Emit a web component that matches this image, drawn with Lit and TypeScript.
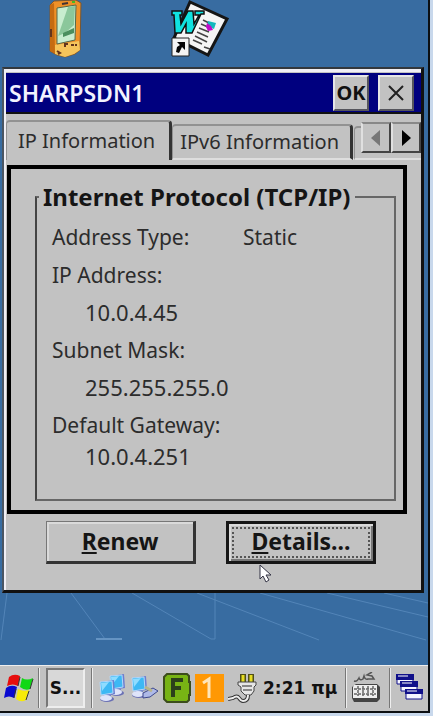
import { LitElement, html, css, svg } from "lit";
import { customElement, state } from "lit/decorators.js";

const details = [
  { label: "IP Address:", value: "10.0.4.45" },
  { label: "Subnet Mask:", value: "255.255.255.0" },
  { label: "Default Gateway:", value: "10.0.4.251" },
];

const monitor = (x: number, y: number) => svg`
  <g transform="translate(${x} ${y})">
    <path d="M2 2 15 0 16 14 4 16Z" fill="#6d7fd0"/>
    <path d="M1 2 13 1 14 13 2 15Z" fill="#3db8f4" stroke="#b4d8fa"/>
    <path d="M2 3 10 2 3 11Z" fill="#8fdcff"/>
    <path d="M6 15h6v3H6z" fill="#7488c4"/>
    <ellipse cx="8" cy="19" rx="7" ry="3" fill="#6a70b4"/>
    <ellipse cx="7" cy="18" rx="6" ry="3" fill="#dfe4fa"/>
  </g>`;

@customElement("app-root")
export class AppRoot extends LitElement {
  @state() private tab = 0;

  static styles = css`
    :host {
      display: flex;
      box-sizing: border-box;
      min-height: 100vh;
      padding: 0 3px 3px 0;
      background: #c8d8ec;
      color: #2c2c2c;
      font: 21px/38px "Noto Sans", sans-serif;
    }
    svg { display: block; flex: none; }
    button { font: inherit; color: inherit; padding: 0; border-radius: 0; }
    .desktop {
      flex: 1;
      min-width: 0;
      display: flex;
      flex-direction: column;
      background: #386ca1;
      border: solid #0c0f12;
      border-width: 0 2px 2px 0;
    }
    .shortcuts { display: flex; gap: 86px; padding: 0 48px 9px; }
    .window {
      margin: 0 4px 0 2px;
      padding: 4px 0 26px 2px;
      background: #c2c2c2;
      border: solid #111;
      border-width: 2px 3px 3px 2px;
      border-left-color: #4b5663;
      border-top-color: #33383d;
      box-shadow: inset 2px 3px #f0eff5;
    }
    .title {
      display: flex;
      align-items: center;
      gap: 9px;
      height: 39px;
      padding: 0 7px 0 3px;
      background: #00007f;
      border-bottom: 2px solid #111;
      color: #f2f2ff;
    }
    .title h1 { flex: 1; margin: 0; font-size: 23px; font-weight: 600; line-height: 38px; }
    .title button {
      display: grid;
      place-items: center;
      width: 36px;
      height: 36px;
      color: #111;
      background: #c2c2c2;
      border: 2px solid;
      border-color: #e6e6e6 #55555c #55555c #e6e6e6;
      font-size: 20px;
      font-weight: 700;
      line-height: 28px;
    }
    .tabs {
      display: flex;
      align-items: flex-end;
      padding-top: 6px;
      box-shadow: inset 0 -2px #dedede;
    }
    .tab {
      height: 36px;
      padding: 0 11px 0 7px;
      background: #c2c2c2;
      border: solid #929292;
      border-width: 2px 3px 0 1px;
      border-right-color: #333;
      border-bottom: 2px solid #dedede;
      border-radius: 4px 4px 0 0;
      font-size: 20px;
      line-height: 30px;
      white-space: nowrap;
    }
    .tab.active {
      height: 40px;
      padding: 0 14px 0 11px;
      border-bottom: 0;
      line-height: 34px;
    }
    .next-tab {
      width: 8px;
      height: 34px;
      margin-left: 1px;
      border: solid #929292;
      border-width: 2px 0 0 1px;
      border-bottom: 2px solid #dedede;
      border-radius: 4px 0 0 0;
      box-sizing: border-box;
    }
    .scroll { display: flex; flex: 1; justify-content: flex-end; align-self: flex-start; }
    .scroll button {
      display: grid;
      place-items: center;
      width: 30px;
      height: 31px;
      margin-top: 2px;
      background: #c2c2c2;
      border: 2px solid;
      border-color: #888 #444 #444 #e0e0e0;
    }
    .panel {
      margin: 5px 14px 0 1px;
      padding: 14px 7px 9px 24px;
      border: 4px solid #000;
    }
    fieldset {
      min-width: 0;
      margin: 0;
      padding: 7px 14px 31px 15px;
      border: 2px solid #666;
      border-left-color: #444;
    }
    legend {
      margin-left: -13px;
      padding: 0 4px;
      color: #151515;
      font-size: 24px;
      font-weight: 700;
      line-height: 28px;
      white-space: nowrap;
    }
    dl { margin: 0; }
    dt, dd { margin: 0; }
    dd { padding-left: 33px; font-size: 22px; line-height: 37px; }
    dd:last-child { line-height: 24px; }
    .inline { display: grid; grid-template-columns: 191px 1fr; }
    .inline dd { padding: 0; font-size: 21px; line-height: 38px; }
    .actions {
      position: relative;
      display: flex;
      justify-content: center;
      gap: 30px;
      padding: 7px 5px 0 0;
    }
    .actions button {
      width: 150px;
      height: 43px;
      padding-bottom: 2px;
      background: #c2c2c2;
      border: solid #333;
      border-width: 1px 3px 3px 1px;
      border-left-color: #777;
      border-top-color: #777;
      box-shadow: inset 2px 2px #dadada;
      color: #151515;
      font-size: 23px;
      font-weight: 700;
      line-height: 30px;
    }
    .actions .default {
      padding: 3px;
      border: 3px solid #161616;
      box-shadow: inset 2px 2px #dadada, inset -2px -2px #777;
    }
    .focus { display: block; height: 27px; border: 2px dotted #555; line-height: 24px; }
    .pointer { position: absolute; left: 253px; top: 50px; }
    .wall { flex: 1; min-height: 0; overflow: hidden; }
    .taskbar {
      display: flex;
      align-items: center;
      height: 46px;
      padding: 0 4px;
      background: #c2c2c2;
      box-shadow: inset 0 1px #eee;
      font: 700 17px/32px "DejaVu Sans", sans-serif;
      color: #111;
    }
    .task {
      flex: none;
      width: 39px;
      height: 40px;
      margin: 0 2px;
      background: #d8d8d8;
      border: 2px solid;
      border-color: #777 #eee #eee #777;
      text-align: center;
      white-space: nowrap;
    }
    .sep { flex: none; width: 1px; height: 40px; margin: 0 4px; background: #777; border-right: 1px solid #eee; }
    .tray { display: flex; flex: 1; align-items: center; gap: 4px; padding-left: 2px; }
    time { margin-left: 1px; white-space: nowrap; }
  `;

  render() {
    return html`
      <main class="desktop">
        <div class="shortcuts">
          <svg width="36" height="58" viewBox="0 0 36 58" aria-label="Handheld">
            <path d="M2 5 6 1 28 0 33 3 32 50 27 54 17 57 9 55 2 51Z" fill="#ef9128" stroke="#7a5730"/>
            <path d="M2 5 6 3 7 54 2 51Z" fill="#c56b12"/>
            <path d="M7 45 31 41 32 50 26 54 17 57 7 54Z" fill="#f5c45b"/>
            <path d="M9 8 28 5 27 40 9 44Z" fill="#c8edcf" stroke="#55694a"/>
            <path d="M20 7 27 6 26 25 17 33 10 36Z" fill="#8bc79b"/>
            <path d="M15 33 26 28v5l-11 4Z" fill="#4b8f5e"/>
            <path d="M14 4 20 3" stroke="#433" stroke-width="2"/><path d="M24 2h3" stroke="#4b2" stroke-width="2"/>
            <path d="M17 47v-3h3m3 1h3m2-1v2M3 29v8M9 51l3 2-2 1" stroke="#64351c" stroke-width="2" fill="none"/>
          </svg>
          <svg width="60" height="58" viewBox="0 0 60 58" aria-label="Document shortcut">
            <path d="M20 2 57 19 38 55 4 38Z" fill="#f5f5f5" stroke="#151515" stroke-width="3"/>
            <path d="M2 11H12V15H10L11 24 18 11H23L24 24 29 15H25V11H34V14H31L22 33H16V24L11 33H5L4 15H2Z" fill="#10e2e0" stroke="#111" stroke-width="1.5"/>
            <path d="m33 20 6 3m-8 1 7 3m-9 1 10 4m-12 0 11 5m-13-1 12 6m-14-2 9 4m2 3 6 2" stroke="#444" stroke-width="1.5"/>
            <path d="m38 21 8 2-2 6-7-3Z" fill="#14b9bd"/><path d="m37 23 4 3 2 4-5 1-2-4Z" fill="#c10bc8"/>
            <path d="M2 38h17v18H2z" fill="#f4f4f4" stroke="#222"/>
            <path d="M7 42h8v8l-3-3-3 6-3-1 1-5 3-2Z" fill="#050505"/>
          </svg>
        </div>

        <section class="window" aria-label="SHARPSDN1">
          <header class="title">
            <h1>SHARPSDN1</h1>
            <button>OK</button>
            <button aria-label="Close">
              <svg width="16" height="16" viewBox="0 0 16 16"><path d="m1 1 14 14M15 1 1 15" stroke="#222" stroke-width="2"/></svg>
            </button>
          </header>

          <div class="tabs" role="tablist">
            ${["IP Information", "IPv6 Information"].map(
              (name, i) => html`<button
                role="tab"
                aria-selected=${this.tab === i}
                class="tab ${this.tab === i ? "active" : ""}"
                @click=${() => (this.tab = i)}
              >${name}</button>`
            )}
            <div class="next-tab"></div>
            <div class="scroll">
              <button aria-label="Previous tab"><svg width="10" height="18" viewBox="0 0 10 18"><path d="M9 1v16L0 9Z" fill="#777"/></svg></button>
              <button aria-label="Next tab"><svg width="10" height="18" viewBox="0 0 10 18"><path d="M1 1v16l9-8Z" fill="#000"/></svg></button>
            </div>
          </div>

          <div class="panel" role="tabpanel">
            <fieldset>
              <legend>Internet Protocol (TCP/IP)</legend>
              <dl class="inline"><dt>Address Type:</dt><dd>Static</dd></dl>
              <dl>${details.map((d) => html`<dt>${d.label}</dt><dd>${d.value}</dd>`)}</dl>
            </fieldset>
          </div>

          <div class="actions">
            <button><u>R</u>enew</button>
            <button class="default"><span class="focus"><u>D</u>etails...</span></button>
            <svg class="pointer" width="13" height="19" viewBox="0 0 13 19"><path d="M1 1v14l3-3 3 6 3-2-3-5h5Z" fill="#fff" stroke="#334"/></svg>
          </div>
        </section>

        <div class="wall">
          <svg width="428" height="72" viewBox="0 0 428 72" fill="none" stroke="#5385b8">
            <path d="M7 0 1 47M71 0 105 46M132 0 211 46H215V0M197 0 319 47M260 0 426 47M327 0 428 24M384 0 428 10"/>
            <path d="M96 46h26" stroke="#6594c3" stroke-width="2"/>
          </svg>
        </div>

        <footer class="taskbar">
          <svg width="30" height="30" viewBox="0 0 30 30" aria-label="Start">
            <path d="M5 4q5-4 11-1l-2 10q-5-3-11 0Z" fill="#e60d0d"/>
            <path d="M18 5q5 3 11 0l-3 11q-5 2-10-2Z" fill="#0fd816"/>
            <path d="M2 15q5-4 11-1l-3 11q-5-3-10 0Z" fill="#0909d0"/>
            <path d="M14 16q5 3 11 1l-3 10q-5 3-10-1Z" fill="#f6ea0a"/>
            <path d="m14 13 2-9m10 12 3-10M10 25l2-9m10 11 3-9" stroke="#333"/>
          </svg>
          <i class="sep"></i>
          <button class="task">S...</button>
          <i class="sep"></i>
          <div class="tray">
            <svg width="27" height="30" viewBox="0 0 27 30">${monitor(10, 1)}${monitor(0, 7)}</svg>
            <svg width="29" height="30" viewBox="0 0 29 30">
              ${monitor(1, 3)}
              <path d="m13 20 10-5 5 3-8 6-7 1Z" fill="#aeb9e8" stroke="#3c478c"/><path d="m15 14 7 4" stroke="#b8b58b" stroke-width="3"/>
            </svg>
            <svg width="28" height="30" viewBox="0 0 28 30">
              <path d="M4 1h20l2 2v6h1v13h-1v5l-2 2H4l-3-3V4Z" fill="#78b414" stroke="#3c4d1c" stroke-width="2"/>
              <path d="M10 24V7h10M10 15h8" fill="none" stroke="#2c401b" stroke-width="4"/>
            </svg>
            <svg width="29" height="30" viewBox="0 0 29 30"><path d="M0 1h29v28H0z" fill="#ff9804"/><path d="m8 10 6-4v19" fill="none" stroke="#ffe6b9" stroke-width="3"/></svg>
            <svg width="30" height="30" viewBox="0 0 30 30">
              <path d="M15 1v9m8-9v9" stroke="#504f18" stroke-width="6"/><path d="M15 2v7m8-7v7" stroke="#e6dd22" stroke-width="3"/>
              <path d="M10 9h18v3l-2 2v4l-3 4h-6l-4-4v-4l-3-2Z" fill="#e6e6e6" stroke="#444"/><path d="M14 13h10m-9 4h9" stroke="#888" stroke-width="2"/>
              <path d="M20 22q0 6-5 6-2 0-4-3t-6 0l-5 1" fill="none" stroke="#333" stroke-width="4"/><path d="M20 22q0 6-5 6-2 0-4-3t-6 0l-5 1" fill="none" stroke="#eee" stroke-width="2"/>
            </svg>
            <time>2:21 πμ</time>
          </div>
          <i class="sep"></i>
          <svg width="34" height="32" viewBox="0 0 34 32" aria-label="Keyboard">
            <path d="M3 9q3 1 5-3 1 3 4 1l1-3q1 4 4 3h6l-2-3-5-1 5-3" fill="none" stroke="#555" stroke-width="1.5"/>
            <path d="M5 12h21l3 3v12l-3 3H3l-2-4V15Z" fill="#444"/><path d="M3 13h23v13H2V15Z" fill="#eee"/>
            <path d="M3 17h22M3 22h22M7 14v10m5-10v10m5-10v10m5-10v10" stroke="#666" stroke-width="1.5" stroke-dasharray="3 1"/>
          </svg>
          <i class="sep"></i>
          <svg width="29" height="30" viewBox="0 0 29 30" aria-label="Windows">
            <path d="M2 2h16v9H2zM6 9h16v9H6zM11 17h16v9H11z" fill="#f4f4ff" stroke="#10108a"/>
            <path d="M1 1h18v6H1zM5 8h18v6H5zM10 16h18v5H10z" fill="#10108a"/><path d="M3 3h10M7 10h10m-5 8h10" stroke="#fff"/>
          </svg>
        </footer>
      </main>
    `;
  }
}
